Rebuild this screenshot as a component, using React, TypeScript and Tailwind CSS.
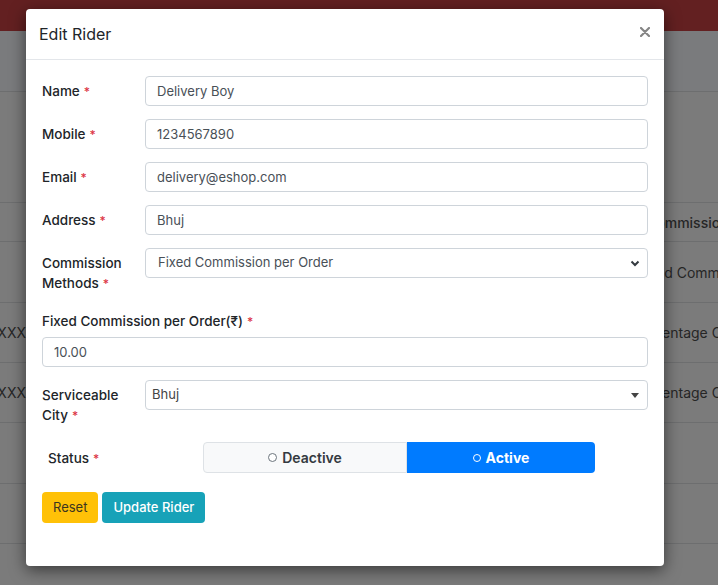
import * as React from "react";

function Req() {
  return <span className="ml-[4px] text-[12px] leading-none text-[#dc3545]">*</span>;
}

interface FieldRowProps {
  label: React.ReactNode;
  children: React.ReactNode;
}

function FieldRow({ label, children }: FieldRowProps) {
  return (
    <div className="flex items-start">
      <label className="w-[103px] shrink-0 py-[5px] text-[13.5px] font-medium leading-[20px] text-[#212529]">{label}</label>
      <div className="min-w-0 flex-1">{children}</div>
    </div>
  );
}

function TextInput({ value }: { value: string }) {
  return (
    <input
      readOnly
      defaultValue={value}
      className="block h-[30px] w-full rounded-[4px] border border-[#ced4da] bg-white px-[11px] text-[13px] leading-[20px] text-[#495057] outline-none"
    />
  );
}

function BgRow({ children, className }: { children?: React.ReactNode; className: string }) {
  return <div className={`flex items-center border-b border-[#6d6e6f] text-[14px] text-[#262626] ${className}`}>{children}</div>;
}

export default function App() {
  return (
    <div className="relative h-[585px] w-[718px] overflow-hidden bg-[#7b7b7b] font-['Inter',sans-serif]">
      {/* page behind the backdrop */}
      <div className="h-[31px] bg-[#632021]" />
      <div className="h-[61px] border-b border-[#6d6e6f] bg-[#7a7b7d]" />
      <BgRow className="h-[111px]" />
      <BgRow className="h-[39px] font-medium">
        <div className="w-[26px] shrink-0" />
        <span className="ml-[620px] whitespace-nowrap">Commission</span>
      </BgRow>
      <BgRow className="h-[61px]">
        <div className="w-[26px] shrink-0" />
        <span className="ml-[611px] whitespace-nowrap">Fixed Commission</span>
      </BgRow>
      <BgRow className="h-[60px]">
        <div className="flex w-[26px] shrink-0 justify-end overflow-hidden whitespace-nowrap">XXXXXX</div>
        <span className="ml-[606px] whitespace-nowrap">Percentage Commission</span>
      </BgRow>
      <BgRow className="h-[60px]">
        <div className="flex w-[26px] shrink-0 justify-end overflow-hidden whitespace-nowrap">XXXXXX</div>
        <span className="ml-[606px] whitespace-nowrap">Percentage Commission</span>
      </BgRow>
      <BgRow className="h-[61px]" />
      <BgRow className="h-[60px]" />

      {/* modal */}
      <div className="absolute left-[26px] top-[9px] w-[638px] rounded-[4px] bg-white shadow-[0_4px_16px_rgba(0,0,0,0.55)]">
        <div className="flex h-[51px] items-center justify-between border-b border-[#e3e6ea] pl-[13px] pr-[14px]">
          <h5 className="text-[16px] font-normal text-[#212529]">Edit Rider</h5>
          <button type="button" className="-mt-[4px] text-[#858585]">
            <svg width="10" height="10" viewBox="0 0 10 10">
              <path d="M1 1L9 9M9 1L1 9" stroke="currentColor" strokeWidth="2.2" strokeLinecap="round" />
            </svg>
          </button>
        </div>

        <div className="px-4 pb-[43px] pt-4">
          <div className="flex flex-col gap-[13px]">
            <FieldRow label={<>Name<Req /></>}>
              <TextInput value="Delivery Boy" />
            </FieldRow>
            <FieldRow label={<>Mobile<Req /></>}>
              <TextInput value="1234567890" />
            </FieldRow>
            <FieldRow label={<>Email<Req /></>}>
              <TextInput value="delivery@eshop.com" />
            </FieldRow>
            <FieldRow label={<>Address<Req /></>}>
              <TextInput value="Bhuj" />
            </FieldRow>
            <FieldRow label={<>Commission Methods<Req /></>}>
              <div className="flex h-[30px] items-center justify-between rounded-[4px] border border-[#ced4da] pl-[12px] pr-[7px] text-[13px] text-[#495057]">
                <span>Fixed Commission per Order</span>
                <svg width="10" height="7" viewBox="0 0 10 7" className="text-[#343a40]">
                  <path d="M1.5 1.5L5 5L8.5 1.5" fill="none" stroke="currentColor" strokeWidth="2" />
                </svg>
              </div>
            </FieldRow>
            <div>
              <label className="mb-[6px] block text-[13.5px] font-medium leading-[20px] text-[#212529]">
                Fixed Commission per Order(₹)<Req />
              </label>
              <TextInput value="10.00" />
            </div>
            <FieldRow label={<>Serviceable City<Req /></>}>
              <div className="flex h-[30px] items-center justify-between rounded-[4px] border border-[#ced4da] pl-[6px] pr-[8px] text-[13px] text-[#444]">
                <span>Bhuj</span>
                <svg width="8" height="5" viewBox="0 0 8 5" className="text-[#444]">
                  <path d="M0 0H8L4 5Z" fill="currentColor" />
                </svg>
              </div>
            </FieldRow>
            <div className="-mt-[1px] flex items-center">
              <label className="w-[161px] shrink-0 pl-[6px] text-[13.5px] font-medium leading-[20px] text-[#212529]">
                Status<Req />
              </label>
              <div className="flex h-[31px] w-[392px]">
                <div className="flex w-[204px] items-center justify-center gap-[5px] rounded-l-[4px] border border-[#dee2e6] bg-[#f8f9fa] text-[14px] font-semibold text-[#343a40]">
                  <span className="h-[9px] w-[9px] rounded-full border border-[#6c757d] bg-white" />
                  Deactive
                </div>
                <div className="flex flex-1 items-center justify-center gap-[5px] rounded-r-[4px] bg-[#007bff] text-[14px] font-bold text-white">
                  <span className="h-[8px] w-[8px] rounded-full border border-white" />
                  Active
                </div>
              </div>
            </div>
          </div>

          <div className="mt-[19px] flex gap-[4px]">
            <button type="button" className="h-[31px] rounded-[4px] bg-[#ffc107] px-[11px] text-[13px] text-[#3b3520]">
              Reset
            </button>
            <button type="button" className="h-[31px] rounded-[4px] bg-[#17a2b8] px-[11px] text-[13px] font-medium text-white">
              Update Rider
            </button>
          </div>
        </div>
      </div>
    </div>
  );
}
